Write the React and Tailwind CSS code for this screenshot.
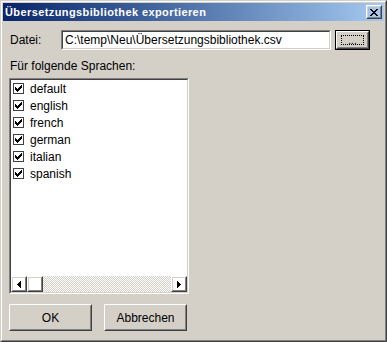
import React from 'react';

const font = { fontFamily: '"Liberation Sans", Arial, sans-serif' };

const Raised = ({ className = '', children }) => (
  <div className={`border border-t-white border-l-white border-r-[#404040] border-b-[#404040] ${className}`}>
    <div className="w-full h-full border border-t-[#d4d0c8] border-l-[#d4d0c8] border-r-[#808080] border-b-[#808080] flex items-center justify-center">
      {children}
    </div>
  </div>
);

const Sunken = ({ className = '', children }) => (
  <div className={`border border-t-[#808080] border-l-[#808080] border-r-white border-b-white ${className}`}>
    <div className="w-full h-full border border-t-[#404040] border-l-[#404040] border-r-[#d4d0c8] border-b-[#d4d0c8] bg-white flex flex-col">
      {children}
    </div>
  </div>
);

// classic 7x7 check mark, pixel rows
const checkRows = ['......#', '.....##', '#...###', '##.###.', '#####..', '.###...', '..#....'];

const Check = () => (
  <div className="w-[11px] h-[11px] border border-[#404040] bg-white flex items-center justify-center">
    <svg width="7" height="7" viewBox="0 0 7 7" shapeRendering="crispEdges">
      {checkRows.map((row, y) =>
        row.split('').map((c, x) => (c === '#' ? <rect key={`${x}-${y}`} x={x} y={y} width="1" height="1" fill="#000" /> : null))
      )}
    </svg>
  </div>
);

const languages = ['default', 'english', 'french', 'german', 'italian', 'spanish'];

export default function App() {
  return (
    <div className="w-[387px] h-[342px] bg-[#d4d0c8] border border-t-[#d4d0c8] border-l-[#d4d0c8] border-r-[#404040] border-b-[#404040] text-[12px] text-black" style={font}>
      <div className="w-full h-full border border-t-white border-l-white border-r-[#808080] border-b-[#808080] p-px flex flex-col">
        <div className="h-[18px] flex items-center justify-between pl-[2px] pr-[2px] bg-linear-to-r from-[#0a246a] to-[#a6caf0]">
          <span className="text-white font-bold text-[11px] tracking-[0.4px] leading-none">Übersetzungsbibliothek exportieren</span>
          <Raised className="w-[16px] h-[14px]">
            <svg width="8" height="7" viewBox="0 0 8 7" shapeRendering="crispEdges">
              <path d="M0 0h2v1h1v1h2v-1h1v-1h2v1h-1v1h-1v1h-1v1h1v1h1v1h1v1h-2v-1h-1v-1h-2v1h-1v1h-2v-1h1v-1h1v-1h1v-1h-1v-1h-1v-1h-1z" fill="#000" />
            </svg>
          </Raised>
        </div>

        <div className="flex items-center mt-[9px] pl-[7px]">
          <span className="w-[51px]">Datei:</span>
          <Sunken className="w-[270px] h-[20px]">
            <div className="pl-[2px] leading-[16px]">C:\temp\Neu\Übersetzungsbibliothek.csv</div>
          </Sunken>
          <div className="ml-[4px] w-[35px] h-[20px] border border-black">
            <Raised className="w-full h-full">
              <div className="w-[23px] h-[10px] border border-dotted border-black flex items-end justify-center text-[10px] leading-[6px]">...</div>
            </Raised>
          </div>
        </div>

        <div className="pl-[7px] mt-[9px] leading-[14px]">Für folgende Sprachen:</div>

        <Sunken className="ml-[6px] mt-[5px] w-[180px] h-[216px]">
          <div className="flex-1 flex flex-col">
            {languages.map((l) => (
              <div key={l} className="h-[17px] flex items-center pl-[2px] gap-[6px]">
                <Check />
                <span>{l}</span>
              </div>
            ))}
          </div>
          <div className="h-[16px] flex">
            <Raised className="w-[16px] h-[16px]">
              <svg width="4" height="7" viewBox="0 0 4 7" shapeRendering="crispEdges"><path d="M3 0h1v7h-1v-1h-1v-1h-1v-1h-1v-1h1v-1h1v-1h1z" fill="#000" /></svg>
            </Raised>
            <Raised className="w-[16px] h-[16px]" />
            <div className="flex-1 bg-[repeating-conic-gradient(#ffffff_0_25%,#d4d0c8_0_50%)] bg-[length:2px_2px]" />
            <Raised className="w-[16px] h-[16px]">
              <svg width="4" height="7" viewBox="0 0 4 7" shapeRendering="crispEdges"><path d="M0 0h1v1h1v1h1v1h1v1h-1v1h-1v1h-1v1h-1z" fill="#000" /></svg>
            </Raised>
          </div>
        </Sunken>

        <div className="flex gap-[12px] ml-[6px] mt-[10px]">
          <Raised className="w-[83px] h-[27px]">OK</Raised>
          <Raised className="w-[83px] h-[27px]">Abbrechen</Raised>
        </div>
      </div>
    </div>
  );
}
